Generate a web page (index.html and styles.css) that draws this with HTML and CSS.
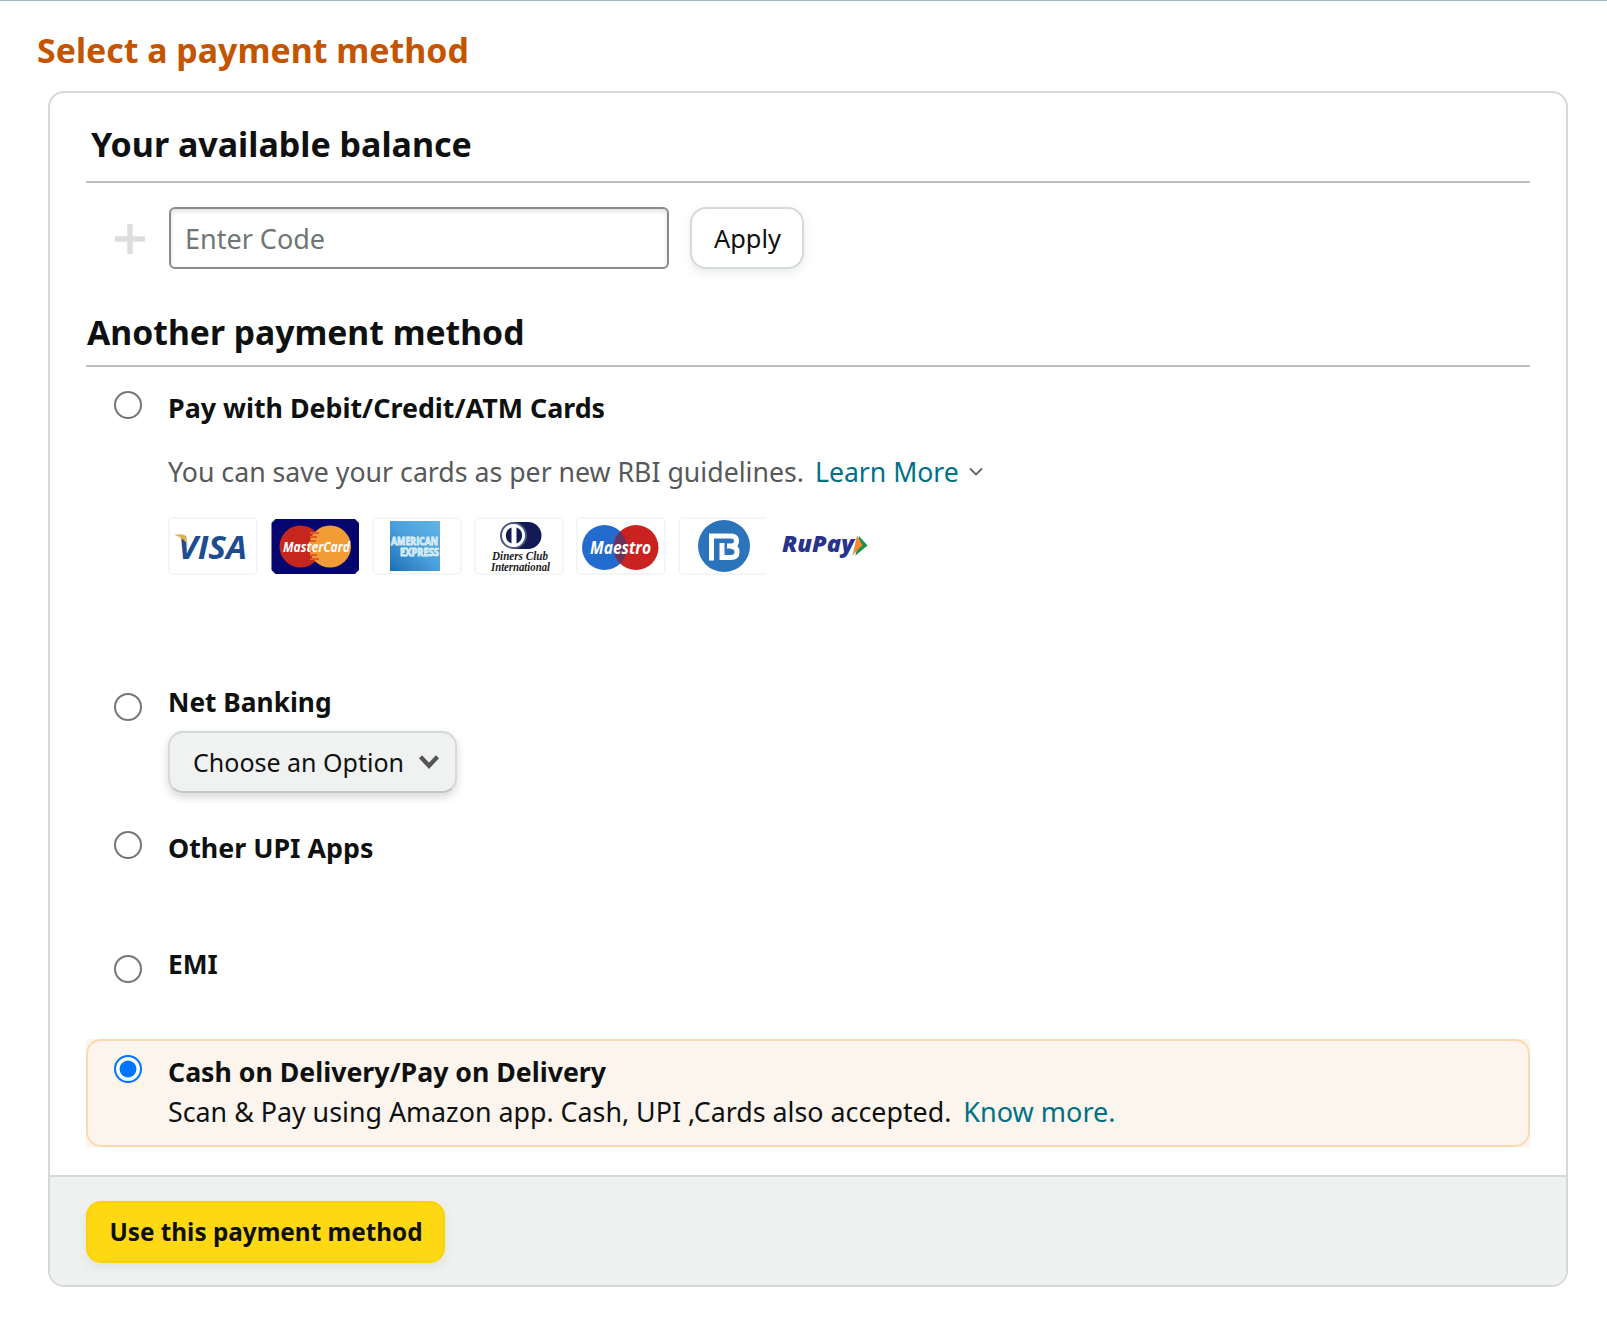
FILE: index.html
```html
<!DOCTYPE html>
<html lang="en">
<head>
<meta charset="utf-8">
<title>Select a payment method</title>
<link rel="stylesheet" href="styles.css">
</head>
<body>
<main class="page">
  <h1 class="page-title">Select a payment method</h1>
  <form class="card">
    <div class="card-body">
      <h2 class="section-title section-title--balance">Your available balance</h2>
      <div class="code-row">
        <svg class="plus" width="30" height="30" viewBox="0 0 30 30"><path d="M15 0v30M0 15h30" stroke="#ddd" stroke-width="5.4"/></svg>
        <input class="code-input" type="text" placeholder="Enter Code">
        <button class="apply" type="button">Apply</button>
      </div>
      <h2 class="section-title section-title--another">Another payment method</h2>

      <div class="option option--cards">
        <input class="radio" type="radio" name="method">
        <div class="option-content">
          <div class="label">Pay with Debit/Credit/ATM Cards</div>
          <div class="hint"><span>You can save your cards as per new RBI guidelines.</span><a class="link learn">Learn More</a><svg class="hint-arrow" width="14" height="10" viewBox="0 0 14 10"><path d="M1 1.5l6 6 6-6" fill="none" stroke="#606565" stroke-width="1.9"/></svg></div>
          <div class="logos">
            <svg class="logo" width="90" height="58" viewBox="0 0 90 58">
              <rect x="1" y="1" width="88" height="56" rx="4" fill="#fff" stroke="#f4f5f5" stroke-width="2"/>
              <text class="visa" x="10" y="41.500" textLength="69" lengthAdjust="spacingAndGlyphs">VISA</text>
              <path d="M6 17.500h8.500q3 0 3.500 3l2 9q-3-8-14-12z" fill="#dfb04a"/>
            </svg>
            <svg class="logo" width="90" height="58" viewBox="0 0 90 58">
              <path d="M5.500 2H85L89 6V53L85 57H5.500L1.500 53V6z" fill="#05056f"/>
              <circle cx="30.500" cy="29.500" r="21" fill="#c5271f"/>
              <circle cx="60" cy="29.500" r="21" fill="#f19c35"/>
              <path d="M40 16h9M40 20h7M40 24h6M40 34h6M40 38h7M40 42h9" stroke="#dc5b28" stroke-width="2"/>
              <text class="mastercard" x="13" y="34.500" textLength="67" lengthAdjust="spacingAndGlyphs">MasterCard</text>
            </svg>
            <svg class="logo" width="90" height="58" viewBox="0 0 90 58">
              <defs><linearGradient id="amex" x1="0" y1="1" x2="1" y2="0"><stop offset="0" stop-color="#1a70b5"/><stop offset=".5" stop-color="#4aa0dc"/><stop offset="1" stop-color="#62b4e4"/></linearGradient></defs>
              <rect x="1" y="1" width="88" height="56" rx="4" fill="#fff" stroke="#f4f5f5" stroke-width="2"/>
              <rect x="18" y="4" width="50" height="50" fill="url(#amex)"/>
              <text class="amex" x="19" y="28" textLength="47" lengthAdjust="spacingAndGlyphs">AMERICAN</text>
              <text class="amex" x="28" y="39" textLength="39" lengthAdjust="spacingAndGlyphs">EXPRESS</text>
            </svg>
            <svg class="logo" width="90" height="58" viewBox="0 0 90 58">
              <rect x="1" y="1" width="88" height="56" rx="4" fill="#fff" stroke="#f4f5f5" stroke-width="2"/>
              <path d="M39 5H54a13.500 13.500 0 0 1 0 27H39z" fill="#111a55"/>
              <circle cx="39.500" cy="18.500" r="12.500" fill="#fff" stroke="#4b5680" stroke-width="2"/>
              <path d="M37.500 10.500a8.500 8.500 0 0 0 0 16zM42.500 10.500a8.500 8.500 0 0 1 0 16z" fill="#111a55"/>
              <text class="diners" x="18" y="43" textLength="56" lengthAdjust="spacingAndGlyphs">Diners Club</text>
              <text class="diners" x="17" y="54" textLength="59" lengthAdjust="spacingAndGlyphs">International</text>
            </svg>
            <svg class="logo" width="90" height="58" viewBox="0 0 90 58">
              <rect x="1" y="1" width="88" height="56" rx="4" fill="#fff" stroke="#f4f5f5" stroke-width="2"/>
              <circle cx="28.500" cy="30.500" r="22.500" fill="#236bce"/>
              <circle cx="60" cy="30.500" r="22.500" fill="#ca2221"/>
              <path d="M44.250 14.500a22.500 22.500 0 0 1 0 32a22.500 22.500 0 0 1 0-32z" fill="#6a315f"/>
              <text class="maestro" x="14" y="36.500" textLength="61" lengthAdjust="spacingAndGlyphs">Maestro</text>
            </svg>
            <svg class="logo" width="90" height="58" viewBox="0 0 90 58">
              <path d="M88 1H5q-4 0-4 4V53q0 4 4 4H88" fill="#fff" stroke="#f5f7f7" stroke-width="2"/>
              <circle cx="46" cy="29" r="26" fill="#2b74bb"/>
              <path d="M33.500 43.500V19H53q5.500 0 5.500 5t-5.500 5h-4M53 29.500q6 0 6 5.500t-6 5.500H41.500M44 40.500V26" fill="none" stroke="#fff" stroke-width="5"/>
            </svg>
            <svg class="logo" width="90" height="58" viewBox="0 0 90 58">
              <text class="rupay" x="2" y="34.500" textLength="72" lengthAdjust="spacingAndGlyphs">RuPay</text>
              <path d="M79 19l8.500 9.500-12 10z" fill="#159450"/>
              <path d="M77 18.500l5.500 9.500-10 10.500z" fill="#f58a31"/>
            </svg>
          </div>
        </div>
      </div>

      <div class="option option--bank">
        <input class="radio" type="radio" name="method">
        <div class="option-content">
          <div class="label">Net Banking</div>
          <button class="select" type="button">Choose an Option<svg width="20" height="14" viewBox="0 0 20 14"><path d="M1.500 1.800l8.500 9 8.500-9" fill="none" stroke="#555" stroke-width="4.300"/></svg></button>
        </div>
      </div>

      <div class="option option--upi">
        <input class="radio" type="radio" name="method">
        <div class="option-content"><div class="label">Other UPI Apps</div></div>
      </div>

      <div class="option option--emi">
        <input class="radio" type="radio" name="method">
        <div class="option-content"><div class="label">EMI</div></div>
      </div>

      <div class="selected-wrap">
        <div class="option option--cod">
          <input class="radio" type="radio" name="method" checked>
          <div class="option-content">
            <div class="label">Cash on Delivery/Pay on Delivery</div>
            <div class="detail"><span>Scan &amp; Pay using Amazon app. Cash, UPI ,Cards also accepted.</span><a class="link know">Know more.</a></div>
          </div>
        </div>
      </div>
    </div>
    <div class="card-footer">
      <button class="primary" type="button">Use this payment method</button>
    </div>
  </form>
</main>
</body>
</html>
```
FILE: styles.css
```css
* { box-sizing: border-box; }

body {
  margin: 0;
  background: #fff;
  color: #0f1111;
  font-family: "Noto Sans", sans-serif;
  font-size: 26.8px;
  line-height: 40px;
}

.page {
  min-height: 1331px;
  border-top: 1px solid #a6b1cb;
  padding: 26px 39px 0 48px;
}

.page-title {
  margin: 0 0 18px -11px;
  color: #c45500;
  font-size: 33.9px;
  line-height: 46px;
  font-weight: 700;
}

.card {
  width: 1520px;
  height: 1196px;
  display: flex;
  flex-direction: column;
  border: 2px solid #d5d9d9;
  border-radius: 16px;
  overflow: hidden;
}

.card-body { flex: 1; padding: 0 36px; }

.section-title {
  margin: 0;
  border-bottom: 2px solid #bbbfbf;
  font-size: 34px;
  line-height: 46px;
  font-weight: 700;
}
.section-title--balance { height: 90px; padding: 28px 0 0 5px; }
.section-title--another { height: 98px; padding-top: 40px; padding-left: 1px; font-size: 33.7px; }

.code-row {
  display: flex;
  align-items: center;
  padding: 24px 0 0 29px;
}

.plus { margin-top: 2px; }

.code-input {
  width: 500px;
  height: 62px;
  margin: 0 21px 0 24px;
  padding: 1px 14px 0;
  border: 2px solid #888c8c;
  border-radius: 6px;
  box-shadow: 0 2px 4px rgba(15, 17, 17, .15) inset;
  color: #0f1111;
  font: 27px "Noto Sans", sans-serif;
}
.code-input::placeholder { color: #6f7676; opacity: 1; }

.apply {
  width: 114px;
  height: 62px;
  padding: 0 0 0 1px;
  border: 2px solid #d5d9d9;
  border-radius: 16px;
  background: #fff;
  box-shadow: 0 4px 10px rgba(213, 217, 217, .5);
  color: #0f1111;
  font: 25.4px "Noto Sans", sans-serif;
}

.option { display: flex; padding-left: 28px; }
.option--cards { height: 308px; padding-top: 21px; }
.option--bank { height: 145px; padding-top: 7px; }
.option--upi { height: 115px; padding-top: 8px; }
.option--emi { height: 104px; padding-top: 9px; }

.radio {
  appearance: none;
  flex: none;
  width: 28px;
  height: 28px;
  margin: 3px 26px 0 0;
  border: 2px solid #767676;
  border-radius: 50%;
  background: #fff;
}
.radio:checked {
  border-color: #0075ff;
  background: radial-gradient(circle, #0075ff 8px, #fff 8.8px);
}
.option--bank .radio { margin-top: 11px; }
.option--emi .radio { margin-top: 11px; }

.label { font-weight: 700; }
.option--bank .label { font-size: 26.3px; }
.option--emi .label { font-size: 26.3px; }
.option--cod .label { font-size: 26.7px; }

.hint {
  display: flex;
  margin: 24px 0 25px;
  color: #565959;
  font-size: 26.7px;
}
.link { color: #007185; }
.learn { margin-left: 11px; font-size: 26.6px; }
.hint-arrow { margin: 15px 0 0 10px; }

.logos { display: flex; gap: 12px; }
.logo { display: block; }
.logo text { font-family: "Open Sans", sans-serif; font-weight: 700; font-style: italic; }
.logo .visa { font-size: 33px; font-weight: 700; fill: #1d4c91; }
.logo .mastercard { font-size: 15px; fill: #fff; }
.logo .amex { font-size: 10px; font-style: normal; fill: #b9dcf2; stroke: #e2f3fa; stroke-width: .8; }
.logo .diners { font-family: "Liberation Serif", serif; font-size: 12px; fill: #1b1b22; }
.logo .maestro { font-size: 18px; fill: #fff; }
.logo .rupay { font-size: 22px; font-weight: 800; fill: #28338b; }

.select {
  display: flex;
  align-items: center;
  justify-content: space-between;
  width: 289px;
  height: 62px;
  margin-top: 9px;
  padding: 0 16px 1px 23px;
  border: 2px solid #d5d9d9;
  border-bottom-color: #c3c7c7;
  border-radius: 15px;
  background: #f0f2f2;
  box-shadow: 0 4px 9px rgba(15, 17, 17, .17);
  color: #0f1111;
  font: 25px "Noto Sans", sans-serif;
}
.select svg { margin-top: 1px; }

.selected-wrap { background: #fcf5ee; }
.option--cod {
  height: 108px;
  padding: 11px 0 0 26px;
  border: 2px solid #fbd8b4;
  border-radius: 15px;
}
.detail { display: flex; font-size: 26.8px; }
.know { margin-left: 12px; font-size: 27px; }

.card-footer {
  height: 110px;
  padding: 24px 36px;
  border-top: 2px solid #d5d9d9;
  background: #eff1f1;
}

.primary {
  width: 359px;
  height: 62px;
  padding: 0 0 1px 1px;
  border: 2px solid #fcd200;
  border-radius: 15px;
  background: #ffd814;
  box-shadow: 0 4px 10px rgba(213, 217, 217, .6);
  color: #0f1111;
  font: 700 24.300px "Noto Sans", sans-serif;
}
```
